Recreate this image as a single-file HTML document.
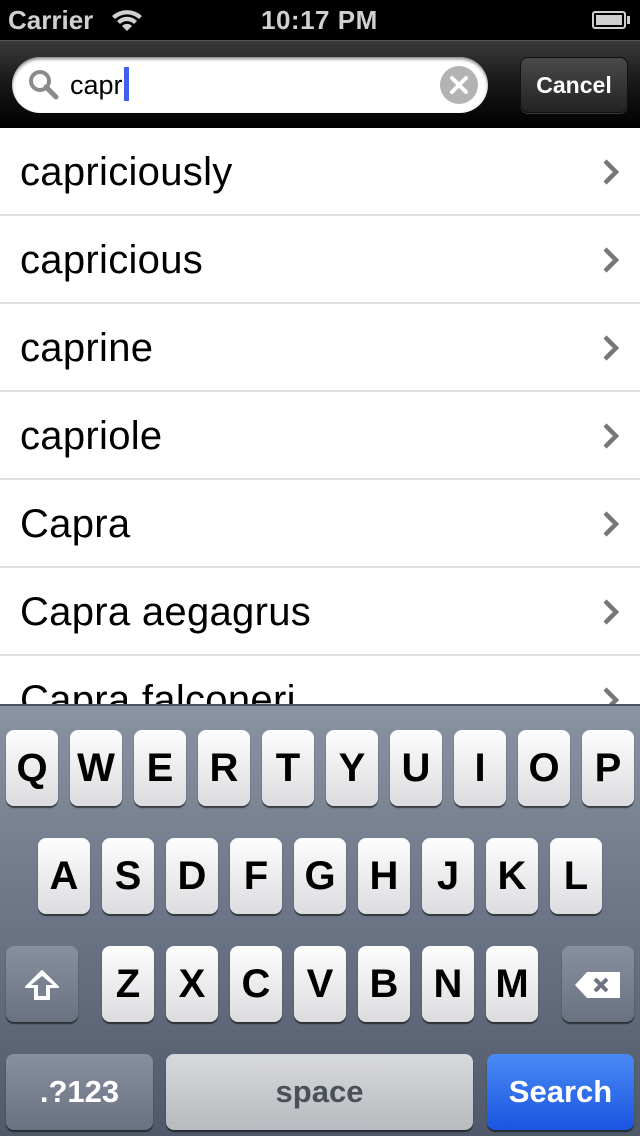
<!DOCTYPE html>
<html><head><style>
*{margin:0;padding:0;box-sizing:border-box}
body{width:640px;height:1136px;overflow:hidden;background:#fff;font-family:"Liberation Sans",sans-serif;position:relative}
.status{position:absolute;left:0;top:0;width:640px;height:40px;background:#000;color:#d0d0d0;font-weight:bold;font-size:26px}
.bar{position:absolute;top:40px;left:0;width:640px;height:88px;background:linear-gradient(#3a3a3a,#1a1a1a 45%,#000);border-top:1px solid #555}
.field{position:absolute;left:12px;top:16px;width:476px;height:56px;border-radius:28px;background:#fff;box-shadow:inset 0 2px 3px rgba(0,0,0,.5)}
.cancel{position:absolute;left:520px;top:16px;width:108px;height:56px;border-radius:8px;background:linear-gradient(#4a4a4a,#222);border:1px solid #111;color:#fff;font-weight:bold;font-size:23px;text-align:center;line-height:54px;box-shadow:0 1px 0 rgba(255,255,255,.2)}
.row{position:absolute;left:0;width:640px;height:88px;border-bottom:2px solid #e0e0e0;font-size:40px;letter-spacing:.3px;line-height:88px;padding-left:20px;color:#000}
.row svg{position:absolute;right:20px;top:31px}
.kb{position:absolute;top:704px;left:0;width:640px;height:432px;background:linear-gradient(#8a93a1,#6b7585 50%,#4f5969);border-top:2px solid #4a5260}
.k{position:absolute;width:52px;height:76px;border-radius:8px;background:linear-gradient(#fdfdfd,#dcdce0);box-shadow:0 2px 1px rgba(0,0,0,.55);font-weight:bold;font-size:40px;text-align:center;line-height:76px;color:#000}
.d{background:linear-gradient(#8890a0,#6a7282);color:#fff}
</style></head><body>
<div class="status">
<span style="position:absolute;left:8px;top:5px">Carrier</span>
<svg style="position:absolute;left:110px;top:8px" width="34" height="24" viewBox="0 0 34 24"><path d="M2 8 A22 22 0 0 1 32 8 L29 11 A18 18 0 0 0 5 11Z M7 13 A14 14 0 0 1 27 13 L24 16 A10 10 0 0 0 10 16Z M12 18 A7 7 0 0 1 22 18 L17 23Z" fill="#d0d0d0"/></svg>
<span style="position:absolute;left:261px;top:5px;letter-spacing:.5px">10:17 PM</span>
<div style="position:absolute;left:592px;top:11px;width:34px;height:18px;border:2px solid #d0d0d0;border-radius:3px;padding:2px"><div style="width:100%;height:100%;background:#d0d0d0"></div></div>
<div style="position:absolute;left:627px;top:16px;width:3px;height:8px;background:#d0d0d0"></div>
</div>
<div class="bar">
<div class="field">
<svg style="position:absolute;left:16px;top:12px" width="32" height="32" viewBox="0 0 32 32"><circle cx="12" cy="12" r="9" stroke="#8a8a8a" stroke-width="4" fill="none"/><path d="M18 18 L28 28" stroke="#8a8a8a" stroke-width="5" stroke-linecap="round"/></svg>
<span style="position:absolute;left:58px;top:13px;font-size:27px;color:#000">capr</span>
<div style="position:absolute;left:112px;top:10px;width:5px;height:34px;background:#4060f0"></div>
<svg style="position:absolute;left:428px;top:9px" width="38" height="38" viewBox="0 0 38 38"><circle cx="19" cy="19" r="19" fill="#b3b3b3"/><path d="M12 12L26 26M26 12L12 26" stroke="#fff" stroke-width="4" stroke-linecap="round"/></svg>
</div>
<div class="cancel">Cancel</div>
</div>
<div class="row" style="top:128px">capriciously<svg width="18" height="26"><path d="M3 2L14 13L3 24" stroke="#777" stroke-width="4.5" fill="none"/></svg></div>
<div class="row" style="top:216px">capricious<svg width="18" height="26"><path d="M3 2L14 13L3 24" stroke="#777" stroke-width="4.5" fill="none"/></svg></div>
<div class="row" style="top:304px">caprine<svg width="18" height="26"><path d="M3 2L14 13L3 24" stroke="#777" stroke-width="4.5" fill="none"/></svg></div>
<div class="row" style="top:392px">capriole<svg width="18" height="26"><path d="M3 2L14 13L3 24" stroke="#777" stroke-width="4.5" fill="none"/></svg></div>
<div class="row" style="top:480px">Capra<svg width="18" height="26"><path d="M3 2L14 13L3 24" stroke="#777" stroke-width="4.5" fill="none"/></svg></div>
<div class="row" style="top:568px">Capra aegagrus<svg width="18" height="26"><path d="M3 2L14 13L3 24" stroke="#777" stroke-width="4.5" fill="none"/></svg></div>
<div class="row" style="top:656px">Capra falconeri<svg width="18" height="26"><path d="M3 2L14 13L3 24" stroke="#777" stroke-width="4.5" fill="none"/></svg></div>
<div class="kb">
<div class="k" style="left:6px;top:24px">Q</div><div class="k" style="left:70px;top:24px">W</div><div class="k" style="left:134px;top:24px">E</div><div class="k" style="left:198px;top:24px">R</div><div class="k" style="left:262px;top:24px">T</div><div class="k" style="left:326px;top:24px">Y</div><div class="k" style="left:390px;top:24px">U</div><div class="k" style="left:454px;top:24px">I</div><div class="k" style="left:518px;top:24px">O</div><div class="k" style="left:582px;top:24px">P</div>
<div class="k" style="left:38px;top:132px">A</div><div class="k" style="left:102px;top:132px">S</div><div class="k" style="left:166px;top:132px">D</div><div class="k" style="left:230px;top:132px">F</div><div class="k" style="left:294px;top:132px">G</div><div class="k" style="left:358px;top:132px">H</div><div class="k" style="left:422px;top:132px">J</div><div class="k" style="left:486px;top:132px">K</div><div class="k" style="left:550px;top:132px">L</div>
<div class="k d" style="left:6px;top:240px;width:72px"><svg style="margin-top:22px" width="40" height="34" viewBox="0 0 40 34"><path d="M20 3L36 19H27V31H13V19H4Z" fill="#fff" stroke="#fff" stroke-width="2" stroke-linejoin="round"/><path d="M20 8L31 17H24V28H16V17H9Z" fill="#7a8292"/></svg></div>
<div class="k" style="left:102px;top:240px">Z</div><div class="k" style="left:166px;top:240px">X</div><div class="k" style="left:230px;top:240px">C</div><div class="k" style="left:294px;top:240px">V</div><div class="k" style="left:358px;top:240px">B</div><div class="k" style="left:422px;top:240px">N</div><div class="k" style="left:486px;top:240px">M</div>
<div class="k d" style="left:562px;top:240px;width:72px"><svg style="margin-top:24px" width="50" height="30" viewBox="0 0 50 30"><path d="M2 15L14 2H47V28H14Z" fill="#fff"/><path d="M22 9L34 21M34 9L22 21" stroke="#6a7282" stroke-width="4"/></svg></div>
<div class="k d" style="left:6px;top:348px;width:147px;font-size:31px">.?123</div>
<div class="k" style="left:166px;top:348px;width:307px;font-size:31px;color:#4a505a;background:linear-gradient(#d8d9dc,#b8babf)">space</div>
<div class="k" style="left:487px;top:348px;width:147px;font-size:31px;color:#fff;background:linear-gradient(#4a8af5,#1a55e0)">Search</div>
</div>
</body></html>
